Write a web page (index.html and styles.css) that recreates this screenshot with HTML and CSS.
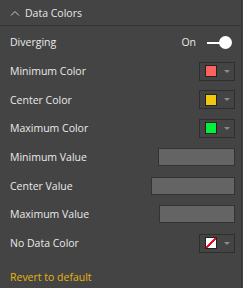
FILE: index.html
```html
<!DOCTYPE html>
<html lang="en">

<head>
    <meta charset="UTF-8">
    <title>Data Colors</title>
    <link rel="stylesheet" href="styles.css">
</head>

<body>
    <div class="pane">
        <div class="card-header">
            <svg class="chevron" width="10" height="6" viewBox="0 0 10 6">
                <path d="M1 5.5 L5 1.5 L9 5.5" fill="none" stroke="#c8c8c8" stroke-width="1"/>
            </svg>
            <span class="card-title">Data Colors</span>
        </div>
        <div class="card-body">
            <div class="row row-toggle">
                <span class="label">Diverging</span>
                <span class="toggle-text">On</span>
                <span class="toggle">
                    <span class="toggle-track"></span>
                    <span class="toggle-knob"></span>
                </span>
            </div>
            <div class="row">
                <span class="label">Minimum Color</span>
                <span class="picker"><span class="swatch" style="background:#fd625e"></span><span class="caret"></span></span>
            </div>
            <div class="row">
                <span class="label">Center Color</span>
                <span class="picker"><span class="swatch" style="background:#f2c80f"></span><span class="caret"></span></span>
            </div>
            <div class="row">
                <span class="label">Maximum Color</span>
                <span class="picker"><span class="swatch" style="background:#01f03c"></span><span class="caret"></span></span>
            </div>
            <div class="row">
                <span class="label">Minimum Value</span>
                <input class="value-input" type="text" style="width:77px">
            </div>
            <div class="row">
                <span class="label">Center Value</span>
                <input class="value-input" type="text" style="width:84px">
            </div>
            <div class="row">
                <span class="label">Maximum Value</span>
                <input class="value-input" type="text" style="width:76px">
            </div>
            <div class="row">
                <span class="label">No Data Color</span>
                <span class="picker"><span class="swatch swatch-none"></span><span class="caret"></span></span>
            </div>
            <div class="revert">Revert to default</div>
        </div>
    </div>
</body>

</html>
```

FILE: styles.css
```css
body {
    margin: 0;
    padding: 0;
    background-color: #444444;
    font-family: "Open Sans", "Liberation Sans", sans-serif;
    font-size: 10.5px;
    color: #eaeaea;
}

.pane {
    width: 241px;
    height: 288px;
    border-right: 1px solid #363636;
    background-color: #444444;
}

.card-header {
    height: 25px;
    display: flex;
    align-items: center;
    padding-left: 10px;
    border-bottom: 1px solid #333333;
}

.chevron {
    margin-right: 5px;
}

.card-title {
    color: #e6e6e6;
}

.card-body {
    padding: 2px 6px 0 10px;
}

.row {
    height: 28.7px;
    display: flex;
    align-items: center;
    justify-content: space-between;
}

.row-toggle {
    justify-content: flex-start;
}

.row-toggle .label {
    flex: 1;
}

.toggle-text {
    margin-right: 11px;
}

.toggle {
    position: relative;
    width: 25px;
    height: 13px;
    margin-right: 3px;
}

.toggle-track {
    position: absolute;
    left: 0;
    top: 6px;
    width: 16px;
    height: 2px;
    background-color: #ffffff;
}

.toggle-knob {
    position: absolute;
    right: 0;
    top: 0;
    width: 13px;
    height: 13px;
    border-radius: 50%;
    background-color: #ffffff;
}

.picker {
    width: 34px;
    height: 17px;
    border: 1px solid #2e2e2e;
    display: flex;
    align-items: center;
    box-sizing: content-box;
}

.swatch {
    width: 10px;
    height: 10px;
    margin-left: 5px;
    border: 1px solid #222222;
}

.swatch-none {
    background: linear-gradient(to bottom right, #ffffff 43%, #e81123 43%, #e81123 57%, #ffffff 57%);
}

.caret {
    width: 0;
    height: 0;
    margin-left: 7px;
    border-left: 3px solid transparent;
    border-right: 3px solid transparent;
    border-top: 3px solid #8a8a8a;
}

.value-input {
    height: 18px;
    box-sizing: border-box;
    background-color: #646464;
    border: 1px solid #333333;
    margin: 0;
    padding: 0;
}

.revert {
    margin-top: 12px;
    color: #e8b40c;
}
```
